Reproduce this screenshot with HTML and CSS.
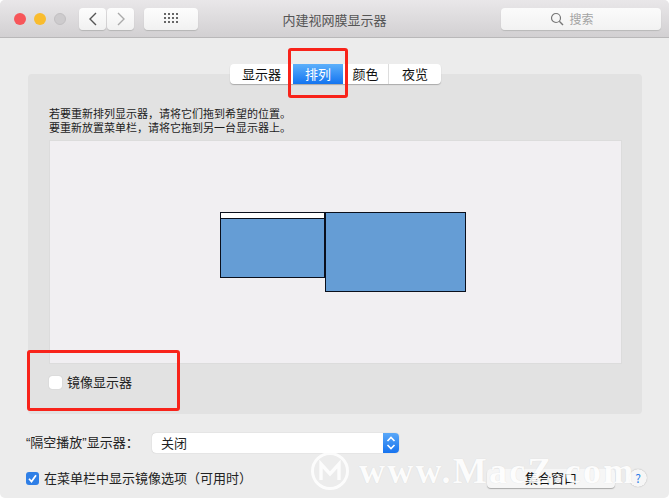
FILE: index.html
```html
<!DOCTYPE html>
<html lang="zh">
<head>
<meta charset="utf-8">
<title>内建视网膜显示器</title>
<link rel="stylesheet" href="styles.css">
</head>
<body>
<div class="window">
  <header class="titlebar">
    <div class="lights">
      <span class="light red"></span><span class="light yellow"></span><span class="light gray"></span>
    </div>
    <div class="nav">
      <button class="tb-btn nav-btn"><svg width="10" height="14" viewBox="0 0 10 14"><path d="M8 1L2 7l6 6" fill="none" stroke="#555" stroke-width="1.4"/></svg></button>
      <button class="tb-btn nav-btn"><svg width="10" height="14" viewBox="0 0 10 14"><path d="M2 1l6 6-6 6" fill="none" stroke="#aaa" stroke-width="1.4"/></svg></button>
    </div>
    <button class="tb-btn grid-btn"><svg width="15" height="11" viewBox="0 0 15 11" fill="#666"><rect x="0" y="0" width="2" height="2"/><rect x="4" y="0" width="2" height="2"/><rect x="8" y="0" width="2" height="2"/><rect x="12" y="0" width="2" height="2"/><rect x="0" y="4" width="2" height="2"/><rect x="4" y="4" width="2" height="2"/><rect x="8" y="4" width="2" height="2"/><rect x="12" y="4" width="2" height="2"/><rect x="0" y="8" width="2" height="2"/><rect x="4" y="8" width="2" height="2"/><rect x="8" y="8" width="2" height="2"/><rect x="12" y="8" width="2" height="2"/></svg></button>
    <div class="title">内建视网膜显示器</div>
    <div class="search"><svg width="14" height="14" viewBox="0 0 14 14"><circle cx="6" cy="6" r="4.5" fill="none" stroke="#777" stroke-width="1.2"/><path d="M9.3 9.3L13 13" stroke="#777" stroke-width="1.4"/></svg><span>搜索</span></div>
  </header>

  <main class="content">
    <section class="panel">
      <nav class="tabs">
        <span class="tab tab-a">显示器</span><span class="tab tab-active">排列</span><span class="tab tab-b">颜色</span><span class="tab tab-c">夜览</span>
      </nav>
      <p class="hint">若要重新排列显示器，请将它们拖到希望的位置。<br>要重新放置菜单栏，请将它拖到另一台显示器上。</p>
      <div class="canvas">
        <div class="display small"><div class="menubar"></div></div>
        <div class="display large"></div>
      </div>
      <label class="mirror"><span class="check"></span>镜像显示器</label>
    </section>
    <div class="airplay">
      <span class="airplay-label">“隔空播放”显示器：</span>
      <div class="select"><span class="select-value">关闭</span>
        <span class="stepper"><svg width="10" height="16" viewBox="0 0 10 16"><path d="M1.5 6L5 2.5 8.5 6M1.5 10L5 13.5 8.5 10" fill="none" stroke="#fff" stroke-width="1.6"/></svg></span>
      </div>
    </div>
    <div class="bottom">
      <label class="menu-option"><span class="check checked"><svg width="13" height="13" viewBox="0 0 13 13"><path d="M3 6.8l2.5 2.8L10 3.2" fill="none" stroke="#fff" stroke-width="1.7"/></svg></span>在菜单栏中显示镜像选项（可用时）</label>
      <button class="gather">集合窗口</button>
      <span class="help">?</span>
    </div>
  </main>

  <div class="mark mark-tab"></div>
  <div class="mark mark-mirror"></div>
  <div class="watermark">
    <svg width="40" height="40" viewBox="0 0 40 40"><circle cx="20" cy="20" r="17.5" fill="none" stroke="#fff" stroke-width="3"/><path d="M11 29V13l9 10 9-10v16" fill="none" stroke="#fff" stroke-width="3.4"/></svg>
    <span>www.MacZ.com</span>
  </div>
</div>
</body>
</html>
```
FILE: styles.css
```css
* { box-sizing: border-box; }
html, body { margin: 0; padding: 0; background: #fff; }
body { font-family: "Noto Sans CJK SC", "Liberation Sans", sans-serif; color: #222; }
.window { position: relative; width: 669px; height: 498px; overflow: hidden; background: #ececec; border-radius: 5px; }

.titlebar { display: flex; align-items: center; height: 38px; padding: 0 8px 0 14px; position: relative; background: linear-gradient(#e9e7e9, #d2d0d2); border-bottom: 1px solid #b9b8b9; }
.lights { display: flex; gap: 8px; width: 65px; }
.light { width: 12px; height: 12px; border-radius: 50%; }
.red { background: #f7565a; }
.yellow { background: #f9bc2e; }
.gray { background: #cdcbcd; border: 1px solid #c2c0c2; }
.tb-btn { display: flex; align-items: center; justify-content: center; height: 22px; padding: 0; background: linear-gradient(#fdfdfd, #f1f1f1); border: 0; border-radius: 4px; box-shadow: 0 1px 1px #b5b5b5; }
.nav { display: flex; gap: 1px; }
.nav-btn { width: 27px; }
.grid-btn { width: 54px; margin-left: 10px; }
.title { position: absolute; left: 0; right: 0; top: 11px; text-align: center; font-size: 13px; line-height: 18px; color: #555; }
.search { margin-left: auto; width: 160px; height: 22px; display: flex; align-items: center; justify-content: center; gap: 5px; padding-right: 18px; background: linear-gradient(#fbfbfb, #f2f2f2); border-radius: 4px; box-shadow: 0 1px 1px #b9b9b9; font-size: 12px; color: #a3a3a3; }

.content { padding: 36px 21px 0 26px; }
.panel { position: relative; margin: 0 6px 0 2px; height: 340px; background: #e2e2e2; border-radius: 4px; padding: 0 20px 0 21px; }
.tabs { position: absolute; top: -10px; left: 202px; display: flex; height: 20px; width: 211px; font-size: 13px; line-height: 20px; background: #fff; border-radius: 4px; box-shadow: 0 1px 1px #aaa; }
.tab { text-align: center; color: #111; }
.tab-a { width: 63px; }
.tab-active { width: 50px; color: #fff; background: linear-gradient(#5db0fb, #1374f0); }
.tab-b { width: 46px; border-right: 1px solid #ddd; }
.tab-c { width: 52px; }
.hint { margin: 0; padding-top: 32px; font-size: 11px; line-height: 14px; color: #1c1c1c; height: 66px; }
.canvas { position: relative; width: 573px; height: 224px; background: #f1eff2; border: 1px solid #dcdcdc; }
.display { position: absolute; background: #659dd5; border: 1px solid #0a0f1c; }
.small { left: 170px; top: 71px; width: 105px; height: 66px; }
.menubar { height: 6px; background: #fff; border-bottom: 1px solid #0a0f1c; }
.large { left: 275px; top: 71px; width: 141px; height: 80px; }
.mirror { display: flex; align-items: center; gap: 5px; margin-top: 9px; font-size: 13px; line-height: 18px; color: #222; }

.check { flex: none; width: 13px; height: 13px; background: #fff; border-radius: 3px; box-shadow: 0 0 1px #aaa; display: flex; }
.checked { background: #2f7fe6; box-shadow: none; }

.airplay { display: flex; align-items: center; height: 20px; margin-top: 19px; font-size: 13px; line-height: 20px; color: #222; }
.airplay-label { flex: none; width: 126px; white-space: nowrap; font-family: "Liberation Sans", "Noto Sans CJK SC", sans-serif; }
.select { flex: none; display: flex; justify-content: space-between; width: 247px; height: 20px; background: #fff; border-radius: 4px; box-shadow: 0 0 1px #aaa; overflow: hidden; }
.select-value { padding-left: 9px; }
.stepper { display: flex; align-items: center; justify-content: center; width: 16px; background: linear-gradient(#5aa8f8, #1673ef); }

.bottom { display: flex; align-items: center; height: 20px; margin-top: 15px; font-size: 13px; line-height: 18px; color: #222; }
.menu-option { flex: none; display: flex; align-items: center; gap: 5px; width: 461px; }
.gather { flex: none; width: 128px; height: 19px; padding: 0; background: #f6f6f6; border: 0; border-radius: 4px; box-shadow: 0 1px 1px #aaa; font: inherit; font-size: 13px; line-height: 18px; color: #111; }
.help { flex: none; width: 18px; height: 18px; margin-left: 14px; line-height: 18px; text-align: center; border-radius: 50%; background: #f6f6f6; box-shadow: 0 0 1px #999; color: #2f7fe6; font-size: 12px; }

.mark { position: absolute; border: 3px solid #f8231a; border-radius: 3px; }
.mark-tab { left: 288px; top: 48px; width: 60px; height: 50px; }
.mark-mirror { left: 27px; top: 350px; width: 153px; height: 61px; }

.watermark { position: absolute; left: 310px; top: 451px; display: flex; align-items: center; gap: 9px; color: #fff; font-family: "Liberation Serif", serif; font-weight: bold; font-size: 36px; line-height: 40px; letter-spacing: 2.2px; white-space: nowrap; opacity: .85; text-shadow: 0 0 1px rgba(0,0,0,.12); }
```
